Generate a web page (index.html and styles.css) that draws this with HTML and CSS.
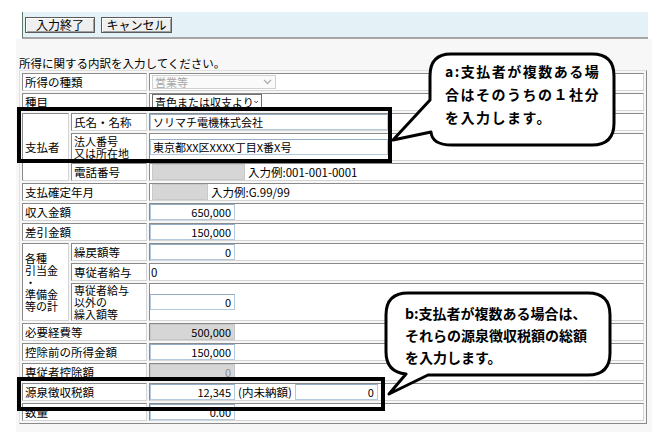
FILE: index.html
```html
<!DOCTYPE html>
<html lang="ja">
<head>
  <meta charset="UTF-8">
  <title>所得の内訳</title>
  <link rel="stylesheet" href="styles.css">
</head>
<body>
<div class="screen">

  <div class="toolbar">
    <button class="btn">入力終了</button>
    <button class="btn">キャンセル</button>
  </div>

  <div class="panel">
    <p class="lead">所得に関する内訳を入力してください。</p>
    <table class="form">
      <colgroup>
        <col class="c-grp">
        <col class="c-sub">
        <col class="c-val">
      </colgroup>
      <tr>
        <th colspan="2">所得の種類</th>
        <td class="val"><span class="sel sel-off">営業等<svg width="9" height="6" viewBox="0 0 9 6"><path d="M1 1 L4.5 4.5 L8 1" fill="none" stroke="#b0b0b0" stroke-width="1.3"/></svg></span></td>
      </tr>
      <tr>
        <th colspan="2">種目</th>
        <td class="val"><span class="sel sel-on">青色または収支より<svg width="9" height="6" viewBox="0 0 9 6"><path d="M1 1 L4.5 4.5 L8 1" fill="none" stroke="#000" stroke-width="1.8"/></svg></span></td>
      </tr>
      <tr>
        <th rowspan="3" class="grp">支払者</th>
        <th>氏名・名称</th>
        <td class="val"><input class="fld txt" value="ソリマチ電機株式会社"></td>
      </tr>
      <tr class="h28">
        <th class="stack">法人番号<br>又は所在地</th>
        <td class="val"><input class="fld txt" value="東京都XX区XXXX丁目X番X号"></td>
      </tr>
      <tr>
        <th>電話番号</th>
        <td class="val"><div class="line"><input class="fld grey"><span>入力例:001-001-0001</span></div></td>
      </tr>
      <tr>
        <th colspan="2">支払確定年月</th>
        <td class="val"><div class="line"><input class="fld grey short"><span>入力例:G.99/99</span></div></td>
      </tr>
      <tr>
        <th colspan="2">収入金額</th>
        <td class="val"><input class="fld" value="650,000"></td>
      </tr>
      <tr>
        <th colspan="2">差引金額</th>
        <td class="val"><input class="fld" value="150,000"></td>
      </tr>
      <tr>
        <th rowspan="3" class="grp stack">各種<br>引当金<br>・<br>準備金<br>等の計</th>
        <th>繰戻額等</th>
        <td class="val"><input class="fld" value="0"></td>
      </tr>
      <tr>
        <th>専従者給与</th>
        <td class="val plain">0</td>
      </tr>
      <tr class="h38">
        <th class="stack">専従者給与<br>以外の<br>繰入額等</th>
        <td class="val"><input class="fld" value="0"></td>
      </tr>
      <tr>
        <th colspan="2">必要経費等</th>
        <td class="val"><input class="fld off" value="500,000"></td>
      </tr>
      <tr>
        <th colspan="2">控除前の所得金額</th>
        <td class="val"><input class="fld" value="150,000"></td>
      </tr>
      <tr>
        <th colspan="2">専従者控除額</th>
        <td class="val"><input class="fld off dim" value="0"></td>
      </tr>
      <tr>
        <th colspan="2">源泉徴収税額</th>
        <td class="val"><div class="line"><input class="fld" value="12,345"><span>(内未納額)</span><input class="fld" value="0"></div></td>
      </tr>
      <tr>
        <th colspan="2">数量</th>
        <td class="val"><input class="fld" value="0.00"></td>
      </tr>
    </table>
  </div>

  <!-- Markierungen -->
  <div class="mark mark-a"></div>
  <div class="mark mark-b"></div>

  <div class="callout callout-a">
    <svg width="230" height="100" viewBox="390 50 230 100">
      <path d="M451 54 H592 Q614 54 614 76 V123 Q614 145 592 145 H452 Q432 145 431 132 L393 140 L430 100 V76 Q430 54 451 54 Z" fill="#fff" stroke="#000" stroke-width="3" stroke-linejoin="round"/>
    </svg>
    <p>a:支払者が複数ある場<br>合はそのうちの１社分<br>を入力します。</p>
  </div>

  <div class="callout callout-b">
    <svg width="232" height="110" viewBox="383 288 232 110">
      <path d="M408 293 H588 Q610 293 610 315 V353 Q610 375 588 375 H428 L389 394 L406 374 Q386 372 386 352 V315 Q386 293 408 293 Z" fill="#fff" stroke="#000" stroke-width="3" stroke-linejoin="round"/>
    </svg>
    <p>b:支払者が複数ある場合は、<br>それらの源泉徴収税額の総額<br>を入力します。</p>
  </div>

</div>
</body>
</html>
```

FILE: styles.css
```css
body {
  margin: 0;
  background: #fff;
  font-family: "Noto Sans CJK JP", sans-serif;
  font-size: 11.5px;
  color: #000;
}

.screen {
  position: relative;
  width: 661px;
  height: 443px;
  overflow: hidden;
}

/* Werkzeugleiste */
.toolbar {
  box-sizing: border-box;
  margin: 12px 0 0 22px;
  width: 626px;
  height: 27px;
  padding: 5px 0 0 2px;
  display: flex;
  gap: 6px;
  align-items: flex-start;
  background: #e4f2f8;
  border-left: 1px solid #5b7f66;
  border-bottom: 2px solid #a6a6a6;
}

.btn {
  box-sizing: border-box;
  width: 70px;
  height: 16px;
  padding: 0;
  font-family: "Noto Sans CJK JP", sans-serif;
  font-size: 12px;
  line-height: 14px;
  color: #000;
  background: #efefef;
  border: 1px solid #5a5a5a;
  box-shadow: inset 1px 1px #fff, inset -1px -1px #a0a0a0;
}

.btn + .btn {
  width: 71px;
}

.panel {
  box-sizing: border-box;
  margin-left: 16px;
  width: 636px;
  height: 393px;
  padding: 17px 0 0 3px;
  background: #f7f7f7;
}

.lead {
  margin: 0;
  line-height: 14px;
}

/* Formular-Tabelle */
.form {
  table-layout: fixed;
  border-collapse: separate;
  border-spacing: 2px;
  width: 628px;
  border: 1px solid;
  border-color: #e0e0e0 #8a8a8a #8a8a8a #e0e0e0;
}

.c-grp { width: 47px; }
.c-sub { width: 76px; }
.c-val { width: 495px; }

.form th,
.form td {
  box-sizing: border-box;
  height: 18px;
  padding: 0 0 0 2px;
  border: 1px solid;
  border-color: #8a8a8a #d4d4d4 #d4d4d4 #8a8a8a;
  background: #fff;
  font-weight: normal;
  text-align: left;
  vertical-align: middle;
  line-height: 14px;
  white-space: nowrap;
}

.form tr.h28 th,
.form tr.h28 td { height: 28px; }

.form tr.h38 th,
.form tr.h38 td { height: 38px; }

.form th.stack {
  font-size: 11px;
  line-height: 12px;
}

.form td.val {
  padding: 0;
}

.form td.plain {
  padding-left: 1px;
}

.line {
  display: flex;
  align-items: center;
  gap: 3px;
}

/* Eingabefelder */
.fld {
  display: block;
  box-sizing: border-box;
  width: 85px;
  height: 16px;
  margin: 0;
  padding: 0 3px;
  font-family: "Noto Sans CJK JP", sans-serif;
  font-size: 11px;
  color: #000;
  text-align: right;
  background: #fff;
  border: 1px solid #b3c9de;
  border-top-color: #94adc6;
  outline: none;
}

.fld.txt {
  width: 238px;
  text-align: left;
  padding-left: 2px;
}

.fld.off {
  background: #d6d6d6;
  border-color: #c6c6c6;
}

.fld.dim {
  color: #8c8c8c;
}

.fld.grey {
  width: 93px;
  margin-left: 2px;
  background: #d6d6d6;
  border-color: #c8c8c8;
}

.fld.grey.short {
  width: 56px;
}

.line .fld + span + .fld {
  width: 83px;
}

/* Auswahlfelder */
.sel {
  box-sizing: border-box;
  display: flex;
  align-items: center;
  justify-content: space-between;
  margin-left: 2px;
  padding: 0 3px 0 2px;
  font-size: 11px;
  line-height: 13px;
}

.sel-off {
  width: 124px;
  height: 14px;
  color: #a8a8a8;
  background: #fafafa;
  border: 1px solid #d0d0d0;
}

.sel-on {
  width: 110px;
  height: 16px;
  border: 1px solid #6e6e6e;
  background: #fff;
}

/* Markierungen und Sprechblasen */
.mark {
  position: absolute;
  box-sizing: border-box;
  border: 4px solid #000;
}

.mark-a {
  left: 17px;
  top: 107px;
  width: 375px;
  height: 56px;
}

.mark-b {
  left: 17px;
  top: 377px;
  width: 368px;
  height: 34px;
}

.callout {
  position: absolute;
}

.callout svg {
  display: block;
}

.callout p {
  position: absolute;
  margin: 0;
  font-size: 14px;
  font-weight: bold;
  white-space: nowrap;
}

.callout-a {
  left: 390px;
  top: 50px;
  width: 230px;
  height: 100px;
}

.callout-a p {
  left: 55px;
  top: 10px;
  line-height: 23px;
  letter-spacing: 1.5px;
}

.callout-b {
  left: 383px;
  top: 288px;
  width: 232px;
  height: 110px;
}

.callout-b p {
  left: 22px;
  top: 14px;
  line-height: 22px;
}
```
